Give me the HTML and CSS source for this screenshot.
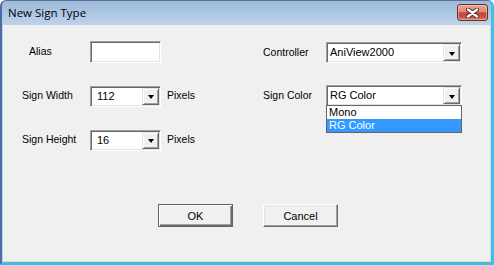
FILE: index.html
```html
<!DOCTYPE html>
<html lang="en">
<head>
<meta charset=utf-8>

<title>New Sign Type</title>

<link rel="stylesheet" href="styles.css">

</head>

<body>

<div class="window">

    <div class="titlebar">
        <span class="title">New Sign Type</span>
        <button class="close" type="button" aria-label="Close">
            <svg width="13" height="10" viewBox="0 0 13 10">
                <path d="M2 1.5 L11 8.5 M11 1.5 L2 8.5" stroke="#4a2420" stroke-width="4.2" stroke-linecap="round"/>
                <path d="M2 1.5 L11 8.5 M11 1.5 L2 8.5" stroke="#fff" stroke-width="2.4" stroke-linecap="round"/>
            </svg>
        </button>
    </div>

    <div class="client">

        <div class="fields">

            <div class="grid left">
                <label class="alias">Alias</label>
                <div class="textbox"></div>
                <span></span>

                <label>Sign Width</label>
                <div class="combo edit"><span class="value">112</span><span class="arrow"></span></div>
                <span class="unit">Pixels</span>

                <label>Sign Height</label>
                <div class="combo edit"><span class="value">16</span><span class="arrow"></span></div>
                <span class="unit">Pixels</span>
            </div>

            <div class="grid right">
                <label>Controller</label>
                <div class="combo"><span class="value">AniView2000</span><span class="arrow"></span></div>

                <label>Sign Color</label>
                <div class="combo">
                    <span class="value">RG Color</span><span class="arrow"></span>
                    <ul class="dropdown">
                        <li>Mono</li>
                        <li class="selected">RG Color</li>
                    </ul>
                </div>
            </div>

        </div>

        <div class="buttons">
            <button class="btn default" type="button">OK</button>
            <button class="btn" type="button">Cancel</button>
        </div>

    </div>

</div>

</body>
</html>
```

FILE: styles.css
```css
html, body {
    margin: 0;
    padding: 0;
}
body {
    background: #fff;
    font: normal 10.5px "Liberation Sans", Arial, sans-serif;
    color: #000;
}

.window {
    box-sizing: border-box;
    width: 494px;
    height: 265px;
    display: flex;
    flex-direction: column;
    border-top: 1px solid #5a7192;
    border-left: 2px solid #4a6f9e;
    border-right: 3px solid #3cc2ea;
    border-bottom: 3px solid #3cc2ea;
    border-radius: 6px 6px 0 0;
    padding-left: 1px;
    background: linear-gradient(#9db9d9, #bcd3ec 24px, #bcd3ec);
}

/* title bar */
.titlebar {
    height: 24px;
    display: flex;
    align-items: flex-start;
    justify-content: space-between;
}
.title {
    font: normal 11.5px "Open Sans", sans-serif;
    line-height: 24px;
    padding-left: 5px;
}
.close {
    box-sizing: border-box;
    width: 31px;
    height: 17px;
    margin: 3px 3px 0 0;
    padding: 0;
    display: flex;
    align-items: center;
    justify-content: center;
    border: 1px solid #6e2e27;
    border-radius: 3px;
    background: linear-gradient(#e6a898 0%, #d98a78 45%, #c4493a 52%, #c54c3c 75%, #de8069 100%);
    box-shadow: inset 0 0 0 1px rgba(255, 210, 200, 0.45);
}

/* client area */
.client {
    flex: 1;
    background: #f0f0f0;
    border-right: 1px solid #d9d9d9;
    border-bottom: 1px solid #d9d9d9;
    padding: 16px 0 0 19px;
}

.fields {
    display: flex;
}
.grid {
    display: grid;
    align-items: center;
}
.grid label {
    margin-bottom: 2px;
}
.left {
    width: 241px;
    grid-template-columns: 68px 71px auto;
    grid-auto-rows: 22px;
    row-gap: 22px;
}
.left .alias {
    padding-left: 7px;
}
.unit {
    margin: 0 0 2px 6px;
}
.right {
    margin-top: 1px;
    grid-template-columns: 63px 136px;
    grid-auto-rows: 21px;
    row-gap: 22px;
}

/* sunken 3D edit and combo boxes */
.textbox, .combo {
    box-sizing: border-box;
    background: #fff;
    border: 1px solid;
    border-color: #a0a0a0 #fff #fff #a0a0a0;
    box-shadow: inset 1px 1px #696969, inset -1px -1px #e3e3e3;
}
.textbox {
    height: 22px;
}
.combo {
    position: relative;
    height: 21px;
    display: flex;
    align-items: stretch;
    padding: 1px;
    font-size: 11px;
}
.combo .value {
    flex: 1;
    padding-left: 2px;
    line-height: 17px;
}
.combo.edit .value {
    padding-left: 5px;
}
.combo .arrow {
    box-sizing: border-box;
    width: 17px;
    display: flex;
    align-items: center;
    justify-content: center;
    background: #f0f0f0;
    border: 1px solid;
    border-color: #e3e3e3 #696969 #696969 #e3e3e3;
    box-shadow: inset 1px 1px #fff, inset -1px -1px #a0a0a0;
}
.combo .arrow::after {
    content: "";
    margin-top: 2px;
    border-left: 3.5px solid transparent;
    border-right: 3.5px solid transparent;
    border-top: 4px solid #000;
}

/* open list of the Sign Color box */
.dropdown {
    position: absolute;
    top: 100%;
    left: -1px;
    right: -1px;
    margin: 0;
    padding: 0;
    list-style: none;
    background: #fff;
    border: 1px solid #646464;
}
.dropdown li {
    height: 13px;
    line-height: 13px;
    padding-left: 2px;
}
.dropdown li.selected {
    background: #3399ff;
    color: #fff;
}

/* dialog buttons */
.buttons {
    display: flex;
    gap: 30px;
    margin: 53px 0 0 136px;
}
.btn {
    box-sizing: border-box;
    width: 75px;
    height: 23px;
    padding: 0;
    font: inherit;
    font-size: 11px;
    color: #000;
    background: #f0f0f0;
    border: 1px solid;
    border-color: #fff #696969 #696969 #fff;
    box-shadow: inset -1px -1px #a0a0a0, inset 1px 1px #e3e3e3;
}
.btn.default {
    border: 1px solid #646464;
    box-shadow: inset 1px 1px #fff, inset -1px -1px #696969, inset -2px -2px #a0a0a0;
}
```
